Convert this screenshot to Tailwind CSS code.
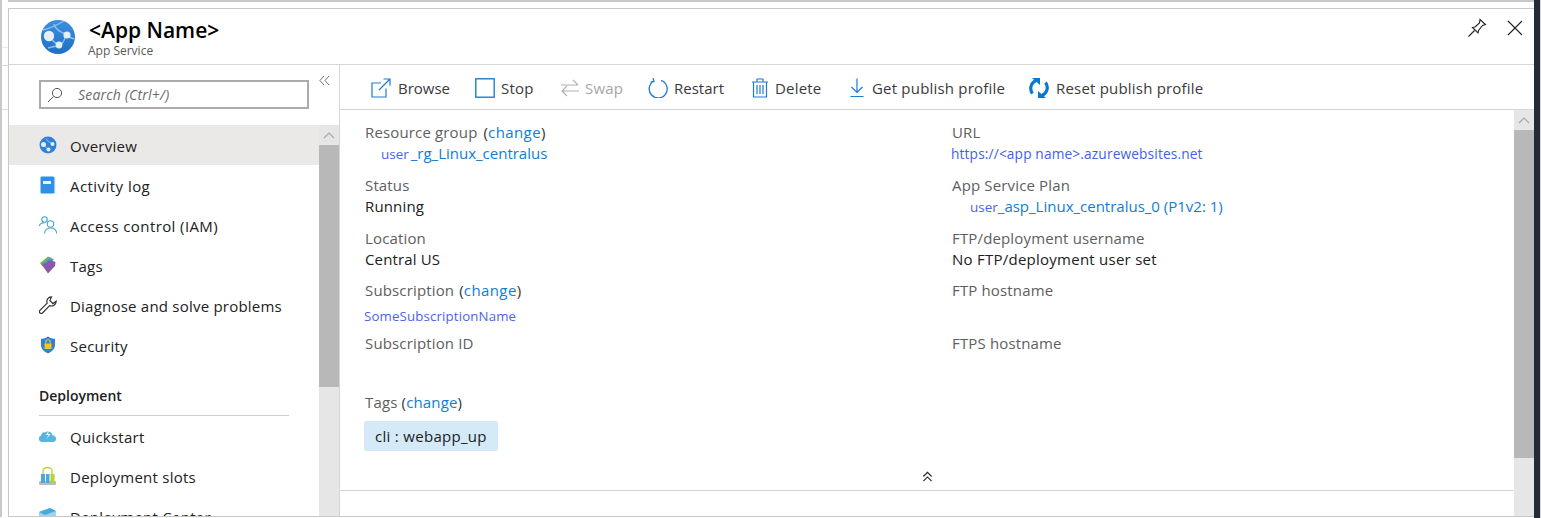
<!DOCTYPE html>
<html><head><meta charset="utf-8"><script src="https://cdn.jsdelivr.net/npm/@tailwindcss/browser@4"></script></head>
<body class="w-[1541px] h-[518px] overflow-hidden bg-white font-['Open_Sans','Noto_Sans',sans-serif] text-[15px] tracking-[0.15px] text-[#212121]">
<div class="flex h-[518px] w-[1541px]">
  <div class="w-[8px] shrink-0 h-[517px] border-l-2 border-[#c8c8c8] flex flex-col">
    <div class="h-[47px]"></div><div class="h-[18px] border-t border-[#e8e8e8]"></div><div class="h-[44px] border-t border-[#dcdcdc]"></div><div class="border-t border-[#dcdcdc]"></div>
  </div>
  <div class="w-[1526px] shrink-0 h-[517px] flex flex-col">
    <div class="h-[8px] shrink-0 border-t-2 border-[#c8c8c8]"></div>
    <div class="h-[509px] flex flex-col border-t border-l border-b border-[#c8c8c8] overflow-hidden">
      <!-- header -->
      <div class="h-[56px] shrink-0 border-b border-[#d6d6d6] flex relative">
        <div class="ml-[31px] mt-[10px] w-[36px] h-[36px]">
          <svg viewBox="0 0 36 36" class="w-[36px] h-[36px]"><defs><linearGradient id="g" x1="0" y1="0" x2="0" y2="1"><stop offset="0" stop-color="#3b8fe0"/><stop offset="1" stop-color="#1f6fc4"/></linearGradient></defs><circle cx="18" cy="18" r="17" fill="url(#g)"/><path d="M3 11 Q12 9 24 2 M14 5 Q16 12 26 15 M9 17 Q14 24 20 27 M26 15 Q25 22 20 27 M8 29 Q14 27 20 27 M27 17 L34 20" stroke="#8cc0ee" stroke-width="1.4" fill="none"/><circle cx="9" cy="17" r="5.2" fill="#e6eef7"/><circle cx="27" cy="16" r="3.6" fill="#e6eef7"/><circle cx="19" cy="26" r="3.4" fill="#e6eef7"/></svg>
        </div>
        <div class="ml-[13px] mt-[7px] flex flex-col tracking-normal">
          <div class="text-[21px] leading-[28px] font-semibold text-black">&lt;App Name&gt;</div>
          <div class="text-[12px] leading-[14px] text-[#595959] -ml-[1px]">App Service</div>
        </div>
        <div class="ml-auto mr-[11px] mt-[9px] flex gap-[20px]">
          <svg viewBox="0 0 20 20" class="w-[20px] h-[20px]" fill="none" stroke="#222" stroke-width="1.1"><path d="M13 1.5 L18.5 6.5 L15.5 7.5 L11.5 12.5 L11 15 L5.5 9.5 L8 9 L12.5 5 Z M7.5 12.5 L1.5 18.5"/></svg>
          <svg viewBox="0 0 16 16" class="w-[16px] h-[16px] mt-[2px]" fill="none" stroke="#222" stroke-width="1.1"><path d="M1 1 L15 15 M15 1 L1 15"/></svg>
        </div>
      </div>
      <div class="flex flex-1 min-h-0">
        <!-- sidebar -->
        <div class="w-[331px] shrink-0 border-r border-[#d6d6d6] flex flex-col overflow-hidden relative">
          <div class="h-[60px] shrink-0 relative">
            <div class="ml-[30px] mt-[15px] w-[270px] h-[29px] border-2 border-[#ababab] flex items-center">
              <svg viewBox="0 0 16 16" class="w-[16px] h-[16px] ml-[6px]" fill="none" stroke="#555" stroke-width="1"><circle cx="10" cy="6" r="4.6"/><path d="M6.6 9.4 L1 15"/></svg>
              <span class="ml-[15px] italic text-[#6b6b6b] text-[14px] tracking-[0.2px]">Search (Ctrl+/)</span>
            </div>
            <svg viewBox="0 0 12 12" class="absolute left-[310px] top-[10px] w-[11px] h-[11px]" fill="none" stroke="#666" stroke-width="1"><path d="M5.5 1 L1 6 L5.5 11 M11 1 L6.5 6 L11 11"/></svg>
          </div>
          <div class="flex flex-1 min-h-0">
            <div class="w-[310px] shrink-0 flex flex-col tracking-[0.25px]">
              <div class="h-[40px] shrink-0 bg-[#ebe9e8] flex items-center pl-[30px]">
                <svg viewBox="0 0 36 36" class="w-[18px] h-[18px]"><circle cx="18" cy="18" r="17" fill="#2f82d6"/><path d="M14 5 Q16 12 26 15 M9 17 Q14 24 20 27" stroke="#8cc0ee" stroke-width="2" fill="none"/><circle cx="9" cy="17" r="5" fill="#e6eef7"/><circle cx="27" cy="16" r="4" fill="#e6eef7"/><circle cx="19" cy="27" r="4" fill="#e6eef7"/></svg>
                <span class="ml-[13px] mt-[2px]">Overview</span>
              </div>
              <div class="h-[40px] shrink-0 flex items-center pl-[30px]">
                <svg viewBox="0 0 18 18" class="w-[18px] h-[18px]"><rect x="1.5" y="0.5" width="13.5" height="17" rx="1" fill="#2f8fe6"/><rect x="15" y="1" width="1.2" height="16.5" fill="#9ccbf2"/><rect x="4" y="5" width="8" height="3" fill="#e8f3fc"/></svg>
                <span class="ml-[13px] mt-[2px] tracking-[0.45px]">Activity log</span>
              </div>
              <div class="h-[40px] shrink-0 flex items-center pl-[30px]">
                <svg viewBox="0 0 18 18" class="w-[18px] h-[18px]" fill="none" stroke="#4aa0d0" stroke-width="1.1"><circle cx="5.5" cy="3.5" r="2.7"/><path d="M0 10 Q1.5 6.8 5.5 6.6"/><circle cx="11.5" cy="8" r="3.2"/><path d="M5.5 17.5 Q6 12 11.5 12 Q17 12 17.8 17.5"/></svg>
                <span class="ml-[13px] mt-[2px] tracking-[0.4px]">Access control (IAM)</span>
              </div>
              <div class="h-[40px] shrink-0 flex items-center pl-[30px]">
                <svg viewBox="0 0 18 18" class="w-[18px] h-[18px]"><path d="M1 7 L9 0.5 L13 2 L8 10 L3 10 Z" fill="#74b843"/><path d="M2.5 8 L10 2 L15 3 L9 12 Z" fill="#4a9fd8"/><path d="M3 9 L11 4 L16.5 6 L16 10 L9 17.5 Z" fill="#8a5aa6"/></svg>
                <span class="ml-[13px] mt-[2px]">Tags</span>
              </div>
              <div class="h-[40px] shrink-0 flex items-center pl-[30px]">
                <svg viewBox="0 0 18 18" class="w-[18px] h-[18px]" fill="none" stroke="#333" stroke-width="1.2"><path d="M12.5 0.8 A4.6 4.6 0 0 0 8.2 7.2 L0.9 14.4 A1.7 1.7 0 0 0 3.5 17 L10.6 9.6 A4.8 4.8 0 0 0 17.2 5.2 L14 7.6 L10.9 4.5 Z"/></svg>
                <span class="ml-[13px] mt-[2px] tracking-[0.22px]">Diagnose and solve problems</span>
              </div>
              <div class="h-[40px] shrink-0 flex items-center pl-[30px]">
                <svg viewBox="0 0 18 18" class="w-[18px] h-[18px]"><path d="M9 0.5 C11 2 14 2.8 16 2.8 V9 C16 13 12.5 16 9 17.5 C5.5 16 2 13 2 9 V2.8 C4 2.8 7 2 9 0.5 Z" fill="#2f80d8"/><rect x="5.5" y="7.5" width="7" height="5.5" fill="#f4c430"/><path d="M6.8 7.5 V6 A2.2 2.2 0 0 1 11.2 6 V7.5" fill="none" stroke="#f4c430" stroke-width="1.1"/></svg>
                <span class="ml-[13px] mt-[2px]">Security</span>
              </div>
              <div class="ml-[30px] w-[250px] h-[30px] mt-[21px] shrink-0 border-b border-[#cfcfcf] font-semibold text-[14px] tracking-normal leading-[20px]">Deployment</div>
              <div class="h-[40px] shrink-0 flex items-center pl-[30px]">
                <svg viewBox="0 0 19 18" class="w-[19px] h-[18px] -ml-[1px]"><path d="M3.5 15 A3.4 3.4 0 0 1 3 8.5 A4 4 0 0 1 7.5 5.2 A4.5 4.5 0 0 1 14.5 8.5 A3.3 3.3 0 0 1 15.5 15 Z" fill="#5ab4e0"/><path d="M11 3 L8 8 H10.5 L8.5 12 L12.5 7 H10 Z" fill="#fff"/></svg>
                <span class="ml-[13px] mt-[2px]">Quickstart</span>
              </div>
              <div class="h-[40px] shrink-0 flex items-center pl-[30px]">
                <svg viewBox="0 0 19 19" class="w-[19px] h-[19px] -ml-[1px]"><path d="M5 7 V4 A4.5 3.5 0 0 1 14 4 V7" fill="none" stroke="#b4d334" stroke-width="1.3"/><rect x="1" y="14" width="17" height="4" rx="1" fill="#bbbbbb"/><rect x="3" y="7" width="4" height="9" fill="#4aa8dc"/><rect x="8" y="7" width="3.5" height="9" fill="#4aa8dc"/><rect x="12.5" y="7" width="4" height="9" fill="#b4d334"/></svg>
                <span class="ml-[13px] mt-[2px]">Deployment slots</span>
              </div>
              <div class="h-[40px] shrink-0 flex items-center pl-[30px]">
                <svg viewBox="0 0 19 18" class="w-[19px] h-[18px] -ml-[1px]"><path d="M1 5 L12 1 L18 4 L18 16 L7 18 L1 15 Z" fill="#9ed3ee"/><path d="M1 5 L7 8 L18 4 L12 1 Z" fill="#4aa8dc"/></svg>
                <span class="ml-[13px] mt-[2px]">Deployment Center</span>
              </div>
            </div>
            <div class="w-[20px] shrink-0 bg-[#e6e6e6] flex flex-col">
              <div class="h-[20px] flex items-center justify-center"><svg viewBox="0 0 12 7" class="w-[12px] h-[7px]" fill="none" stroke="#a8a8a8" stroke-width="1.2"><path d="M1 6 L6 1 L11 6"/></svg></div>
              <div class="h-[242px] bg-[#b8b8b8]"></div>
            </div>
          </div>
        </div>
        <!-- main -->
        <div class="flex-1 min-w-0 flex flex-col">
          <div class="h-[45px] shrink-0 border-b border-[#d6d6d6] flex items-center pl-[31px] pt-[2px] text-[#3a3a3a] tracking-[0.2px]">
            <span class="flex items-center w-[104px]"><svg viewBox="0 0 20 20" class="w-[20px] h-[20px]" fill="none" stroke="#1c7cd5" stroke-width="1.2"><path d="M15 10.5 V19 H1 V5 H10 M8 12 L19 1 M12.5 1 H19 V7.5"/></svg><span class="ml-[7px] tracking-normal">Browse</span></span>
            <span class="flex items-center w-[85px]"><svg viewBox="0 0 20 20" class="w-[20px] h-[20px]" fill="none" stroke="#1c7cd5" stroke-width="1.4"><rect x="0.8" y="0.8" width="18.4" height="18.4"/></svg><span class="ml-[6px]">Stop</span></span>
            <span class="flex items-center w-[88px] text-[#a6a6a6]"><svg viewBox="0 0 20 20" class="w-[20px] h-[20px]" fill="none" stroke="#b0b0b0" stroke-width="1.1"><path d="M1 7 H18 M13 2 L18 7 M19 13 H2 M7 8 L2 13 L7 18"/></svg><span class="ml-[5px]">Swap</span></span>
            <span class="flex items-center w-[102px]"><svg viewBox="0 0 20 20" class="w-[20px] h-[20px]" fill="none" stroke="#1c7cd5" stroke-width="1.3"><path d="M6 3 A9 9 0 1 0 13 2.4 M5 0 L6 3.4 L2.6 4.2"/></svg><span class="ml-[6px] tracking-normal">Restart</span></span>
            <span class="flex items-center w-[97px]"><svg viewBox="0 0 20 20" class="w-[20px] h-[20px]" fill="none" stroke="#1c7cd5" stroke-width="1.2"><path d="M2 4 H18 M7 4 V1 H13 V4 M3.5 4 V19 H16.5 V4 M7 7 V16 M10 7 V16 M13 7 V16"/></svg><span class="ml-[5px]">Delete</span></span>
            <span class="flex items-center w-[182px]"><svg viewBox="0 0 20 20" class="w-[20px] h-[20px]" fill="none" stroke="#1c7cd5" stroke-width="1.2"><path d="M10 0.5 V14 M4.5 9 L10 14.5 L15.5 9 M3.5 18.5 H16.5"/></svg><span class="ml-[5px]">Get publish profile</span></span>
            <span class="flex items-center"><svg viewBox="0 0 20 20" class="w-[20px] h-[20px]" fill="none" stroke="#0a78d2" stroke-width="3.2"><path d="M3.5 15.5 A8.5 8.5 0 0 1 7 2.5 M16.5 4.5 A8.5 8.5 0 0 1 13 17.5"/><path d="M3 0 H11 V7 Z M17 20 H9 V13 Z" fill="#0a78d2" stroke="none"/></svg><span class="ml-[7px]">Reset publish profile</span></span>
          </div>
          <div class="flex flex-1 min-h-0">
            <div class="w-[1174px] shrink-0 flex flex-col">
              <div class="grid grid-cols-[587px_587px] pl-[25px] pt-[12px] auto-rows-[53px] leading-[21px]">
                <div><div class="text-[#5e5e5e]">Resource group <span class="text-[#333] ml-[2px]">(</span><span class="text-[#0f7dd4] tracking-[0.4px]">change</span><span class="text-[#333]">)</span></div><div class="pl-[16px] text-[#0f7dd4] tracking-normal"><span class="text-[#4a63f0] text-[13.5px]">user</span>&nbsp;<span class="-ml-[2px]">_rg_Linux_centralus</span></div></div>
                <div><div class="text-[#5e5e5e]">URL</div><div class="text-[#3f62e8] text-[13.7px] -ml-[1px]">https://&lt;app name&gt;.azurewebsites.net</div></div>
                <div><div class="text-[#5e5e5e]">Status</div><div>Running</div></div>
                <div><div class="text-[#5e5e5e]">App Service Plan</div><div class="pl-[18px] text-[#0f7dd4] tracking-normal"><span class="text-[#4a63f0] text-[13.5px]">user</span>_asp_Linux_centralus_0 (P1v2: 1)</div></div>
                <div><div class="text-[#5e5e5e]">Location</div><div>Central US</div></div>
                <div><div class="text-[#5e5e5e]">FTP/deployment username</div><div class="tracking-[0.25px]">No FTP/deployment user set</div></div>
                <div class="-mt-[1px]"><div class="text-[#5e5e5e]">Subscription <span class="text-[#333] ml-[1px]">(</span><span class="text-[#0f7dd4] tracking-[0.4px]">change</span><span class="text-[#333]">)</span></div><div class="text-[#4a63f0] text-[13.25px] -ml-[1px] mt-[5px]">SomeSubscriptionName</div></div>
                <div class="-mt-[1px]"><div class="text-[#5e5e5e]">FTP hostname</div></div>
                <div class="-mt-[1px]"><div class="text-[#5e5e5e]">Subscription ID</div></div>
                <div class="-mt-[1px]"><div class="text-[#5e5e5e]">FTPS hostname</div></div>
              </div>
              <div class="pl-[25px] mt-[5px] leading-[21px] text-[#5e5e5e]">Tags <span class="text-[#333]">(</span><span class="text-[#0f7dd4]">change</span><span class="text-[#333]">)</span></div>
              <div class="ml-[24px] mt-[8px] w-[134px] h-[30px] rounded-[2px] bg-[#d4eaf8] flex items-center pl-[11px] tracking-[0.3px]">cli : webapp_up</div>
              <div class="h-[40px] border-b border-[#d6d6d6] flex items-center justify-center pt-[11px]"><svg viewBox="0 0 12 12" class="w-[11px] h-[11px]" fill="none" stroke="#222" stroke-width="1.2"><path d="M1.5 6 L6 1.5 L10.5 6 M1.5 11 L6 6.5 L10.5 11"/></svg></div>
            </div>
            <div class="w-[20px] shrink-0 bg-[#e6e6e6] flex flex-col">
              <div class="h-[20px] flex items-center justify-center"><svg viewBox="0 0 12 7" class="w-[12px] h-[7px]" fill="none" stroke="#a8a8a8" stroke-width="1.2"><path d="M1 6 L6 1 L11 6"/></svg></div>
              <div class="h-[328px] bg-[#b8b8b8]"></div>
            </div>
          </div>
        </div>
      </div>
    </div>
  </div>
  <div class="w-[6px] shrink-0 bg-[#252b36]"></div>
  <div class="w-[1px] shrink-0 bg-[#d8d8d8]"></div>
</div>
</body></html>
